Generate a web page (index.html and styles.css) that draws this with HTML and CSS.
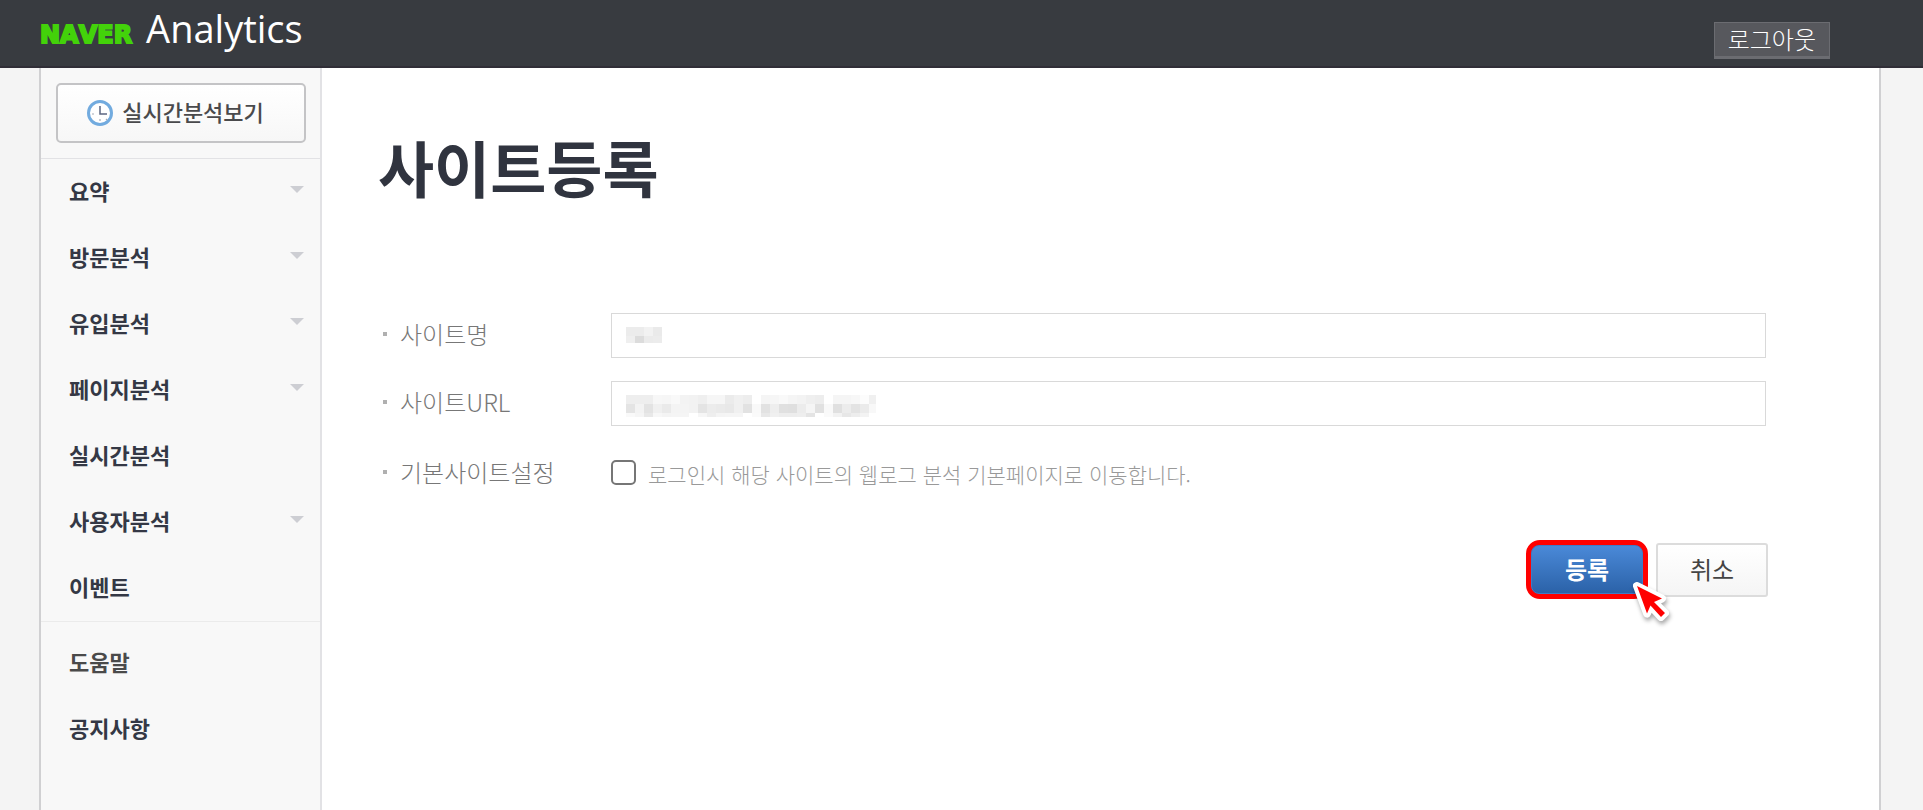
FILE: index.html
```
<!DOCTYPE html>
<html lang="ko">
<head>
    <meta charset="UTF-8">
    <meta name="viewport" content="width=device-width, initial-scale=1.0">
    <title>사이트등록 - NAVER Analytics</title>
    <link rel="stylesheet" href="styles.css">
</head>
<body>

    <!-- 상단 헤더 -->
    <header class="header">
        <a class="logo" href="#"><span class="logo-naver">NAVER</span><span class="logo-name">Analytics</span></a>
        <button class="logout" type="button">로그아웃</button>
    </header>

    <div class="container">
        <!-- 왼쪽 메뉴 -->
        <aside class="sidebar">
            <div class="realtime">
                <button class="realtime-btn" type="button">
                    <svg width="28" height="28" viewBox="0 0 28 28" aria-hidden="true">
                        <circle cx="14" cy="14" r="11.5" fill="#fff" stroke="#72abdf" stroke-width="3"/>
                        <path d="M14 7v8h7" fill="none" stroke="#5c6782" stroke-width="1.5"/>
                        <path d="M6 15h2M14 20v2M20 20l1 1" stroke="#a5abb8" stroke-width="1.2"/>
                    </svg>
                    <span>실시간분석보기</span>
                </button>
            </div>
            <nav class="menu">
                <a class="has-sub" href="#">요약</a>
                <a class="has-sub" href="#">방문분석</a>
                <a class="has-sub" href="#">유입분석</a>
                <a class="has-sub" href="#">페이지분석</a>
                <a href="#">실시간분석</a>
                <a class="has-sub" href="#">사용자분석</a>
                <a href="#">이벤트</a>
            </nav>
            <nav class="menu menu-help">
                <a class="help" href="#">도움말</a>
                <a href="#">공지사항</a>
            </nav>
        </aside>

        <!-- 사이트 등록 폼 -->
        <main class="content">
            <h1>사이트등록</h1>
            <form class="form">
                <div class="row">
                    <label class="label" for="siteName">사이트명</label>
                    <div class="field">
                        <input class="text" type="text" id="siteName">
                        <svg class="mosaic" width="252" height="16" aria-hidden="true" data-cells="ececf2ea/efdcebec"></svg>
                    </div>
                </div>
                <div class="row">
                    <label class="label" for="siteUrl">사이트URL</label>
                    <div class="field">
                        <input class="text" type="text" id="siteUrl">
                        <svg class="mosaic" width="250" height="22" aria-hidden="true" data-cells="eeeeeef7f6f9f3f2eff6f6ebf0edfff5f6f9f5f3efedfff5f5f7fcf0/e4f3e3f0eaf4f4f2e4eceae8f0e2f9e2eee0dfecf5e1f9e0ece3ebf8/f9f5e8f7f4f5f5fff6eef4f5f5fffae8f0ededeee4fffaf2e7edf3ff"></svg>
                    </div>
                </div>
                <div class="row row-check">
                    <span class="label">기본사이트설정</span>
                    <input class="check" type="checkbox" id="siteDefault">
                    <label class="desc" for="siteDefault">로그인시 해당 사이트의 웹로그 분석 기본페이지로 이동합니다.</label>
                </div>
                <div class="buttons">
                    <div class="highlight">
                        <button class="btn btn-submit" type="button">등록</button>
                        <svg class="cursor" width="46" height="50" viewBox="0 0 46 50" aria-hidden="true">
                            <path d="M6 6l25 12.500-8 3.500 11 11-4 4-10.500-11.500-3.500 8z" fill="#f00" stroke="#fff" stroke-width="8" stroke-linejoin="round"/>
                            <path d="M6 6l25 12.500-8 3.500 11 11-4 4-10.500-11.500-3.500 8z" fill="#f00"/>
                        </svg>
                    </div>
                    <button class="btn btn-cancel" type="button">취소</button>
                </div>
            </form>
        </main>
    </div>

    <script src="script.js"></script>
</body>
</html>
```
FILE: styles.css
```
* {
    box-sizing: border-box;
}

body {
    margin: 0;
    min-height: 100vh;
    display: flex;
    flex-direction: column;
    font-family: "Noto Sans CJK KR", sans-serif;
    background-color: #f4f4f4;
}

a {
    color: inherit;
    text-decoration: none;
}

button {
    font-family: inherit;
    cursor: pointer;
}

/* 헤더 */
.header {
    display: flex;
    align-items: center;
    justify-content: space-between;
    height: 68px;
    padding: 0 93px 0 40px;
    background-color: #383b40;
    border-bottom: 2px solid #302e37;
}

.logo {
    display: flex;
    align-items: baseline;
    gap: 14px;
    padding-bottom: 4px;
    line-height: 40px;
}

.logo-naver {
    font-family: "DejaVu Sans", sans-serif;
    font-size: 24px;
    font-weight: bold;
    font-kerning: none;
    color: #43d20a;
    -webkit-text-stroke: 2px #43d20a;
}

.logo-name {
    font-family: "Open Sans", sans-serif;
    font-size: 38px;
    color: #fff;
}

.logout {
    height: 37px;
    margin-top: 14px;
    padding: 0 13px;
    border: 1px solid #6b6c71;
    border-bottom-width: 3px;
    background-color: #57585d;
    color: #fff;
    font-size: 24px;
    font-weight: 300;
    line-height: 32px;
}

/* 본문 */
.container {
    flex: 1;
    display: flex;
    margin: 0 42px 0 39px;
    border: solid #d0d0d2;
    border-width: 0 2px;
    background-color: #fff;
}

.sidebar {
    width: 281px;
    border-right: 2px solid #e2e2e5;
    background-color: #f8f8f8;
}

.realtime {
    padding: 15px;
    border-bottom: 1px solid #e2e2e5;
}

.realtime-btn {
    display: flex;
    align-items: center;
    justify-content: center;
    gap: 8px;
    width: 250px;
    height: 60px;
    padding: 0 12px 0 0;
    border: 2px solid #c4c4c6;
    border-radius: 5px;
    background: linear-gradient(#fff, #f7f7f7);
    color: #4a4a4c;
    font-size: 22px;
    font-weight: 500;
}

.realtime-btn span {
    padding-bottom: 4px;
}

.menu {
    display: flex;
    flex-direction: column;
    border-bottom: 1px solid #ebebeb;
    color: #343845;
    font-size: 22px;
    font-weight: bold;
}

.menu a {
    display: flex;
    align-items: center;
    justify-content: space-between;
    height: 66px;
    padding: 0 16px 5px 28px;
}

.menu .has-sub::after {
    content: "";
    border: solid transparent;
    border-width: 7px 7px 0;
    border-top-color: #cdced3;
}

.menu-help {
    padding-top: 8px;
    border-bottom: 0;
}

.menu .help {
    color: #4a4a4a;
}

/* 등록 폼 */
.content {
    flex: 1;
    padding: 54px 113px 40px 56px;
}

h1 {
    margin: 0 0 101px;
    color: #30343f;
    font-size: 61px;
    font-weight: bold;
    line-height: 90px;
}

.row {
    display: flex;
    align-items: center;
    margin-bottom: 23px;
}

.label {
    display: flex;
    align-items: center;
    width: 233px;
    padding-bottom: 4px;
    color: #777;
    font-size: 24px;
    font-weight: 300;
    line-height: 36px;
}

.label::before {
    content: "";
    width: 4px;
    height: 4px;
    margin: 0 13px 0 5px;
    background-color: #b0b0b0;
}

.field {
    position: relative;
    flex: 1;
}

.text {
    display: block;
    width: 100%;
    height: 45px;
    padding: 0 14px;
    border: 1px solid #d9d9d9;
    background-color: #fff;
    color: #777;
    font-family: inherit;
    font-size: 21px;
}

/* 입력값 가림 처리 */
.mosaic {
    position: absolute;
    top: 14px;
    left: 15px;
    pointer-events: none;
}

.row-check {
    margin: 28px 0 46px;
}

.row-check .label {
    padding-bottom: 0;
}

.check {
    appearance: none;
    width: 25px;
    height: 25px;
    margin: 0;
    border: 2px solid #767676;
    border-radius: 5px;
    background-color: #fff;
}

.desc {
    padding: 4px 0 0 12px;
    color: #999;
    font-size: 21px;
    font-weight: 300;
}

.buttons {
    display: flex;
    align-items: center;
    justify-content: flex-end;
    gap: 8px;
    margin: 50px -2px 0 0;
}

.highlight {
    position: relative;
    border: 5px solid #f00;
    border-radius: 14px;
    background-color: #f00;
}

.btn {
    display: block;
    width: 112px;
    height: 54px;
    padding: 0 0 2px;
    border: 2px solid #dcdcdc;
    border-radius: 3px;
    font-size: 24px;
}

.btn-submit {
    height: 49px;
    border: 1px solid #3f7ac6;
    border-radius: 8px;
    background: linear-gradient(#4a89d8, #2b62a8);
    color: #fff;
    font-weight: bold;
}

.btn-cancel {
    background: linear-gradient(#fff, #f5f5f5);
    color: #444;
}

.cursor {
    position: absolute;
    right: -34px;
    bottom: -36px;
    filter: drop-shadow(1px 3px 2px rgba(0, 0, 0, 0.35));
}
```
FILE: script.js
```
const CELL = 9;

// 각 칸은 두 자리 회색값, 줄은 '/'로 구분
document.querySelectorAll('.mosaic').forEach((svg) => {
    svg.dataset.cells.split('/').forEach((line, row) => {
        line.match(/../g).forEach((gray, col) => {
            const rect = document.createElementNS('http://www.w3.org/2000/svg', 'rect');
            rect.setAttribute('x', col * CELL);
            rect.setAttribute('y', row * CELL);
            rect.setAttribute('width', CELL);
            rect.setAttribute('height', CELL);
            rect.setAttribute('fill', '#' + gray + gray + gray);
            svg.appendChild(rect);
        });
    });
});
```
